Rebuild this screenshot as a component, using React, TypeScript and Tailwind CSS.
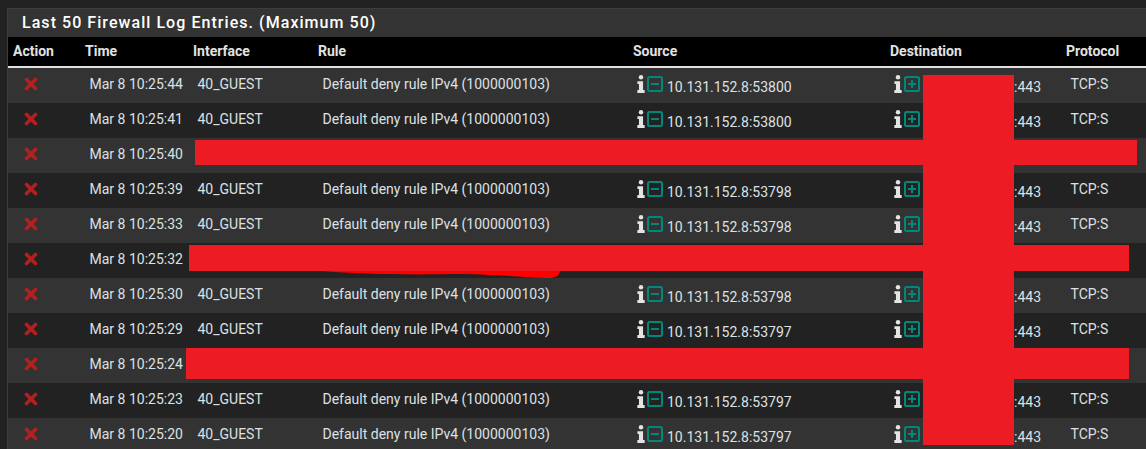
const columns = 'grid grid-cols-[72px_108px_125px_315px_257px_176px_1fr]';

const rows = [
  { time: 'Mar 8 10:25:44', source: '10.131.152.8:53800' },
  { time: 'Mar 8 10:25:41', source: '10.131.152.8:53800' },
  { time: 'Mar 8 10:25:40', hidden: true },
  { time: 'Mar 8 10:25:39', source: '10.131.152.8:53798' },
  { time: 'Mar 8 10:25:33', source: '10.131.152.8:53798' },
  { time: 'Mar 8 10:25:32', hidden: true },
  { time: 'Mar 8 10:25:30', source: '10.131.152.8:53798' },
  { time: 'Mar 8 10:25:29', source: '10.131.152.8:53797' },
  { time: 'Mar 8 10:25:24', hidden: true },
  { time: 'Mar 8 10:25:23', source: '10.131.152.8:53797' },
  { time: 'Mar 8 10:25:20', source: '10.131.152.8:53797' },
];

function BlockIcon() {
  return (
    <svg width="14" height="14" viewBox="0 0 14 14" className="text-[#b3201f]">
      <path d="M2.5 2.5 L11.5 11.5 M11.5 2.5 L2.5 11.5" stroke="currentColor" strokeWidth="3.6" strokeLinecap="round" />
    </svg>
  );
}

function InfoIcon() {
  return (
    <svg width="8" height="18" viewBox="0 0 9 20" className="text-[#e4e4e4]" preserveAspectRatio="none">
      <circle cx="4.5" cy="2.6" r="2.5" fill="currentColor" />
      <path d="M0.5 7 H6.8 V16.8 H8.6 V20 H0.4 V16.8 H2.2 V10 H0.5 Z" fill="currentColor" />
    </svg>
  );
}

function BoxIcon({ plus }: { plus?: boolean }) {
  return (
    <svg width="16" height="16" viewBox="0 0 16 16" className="text-[#00897b]">
      <rect x="1" y="1" width="14" height="14" rx="1.5" fill="none" stroke="currentColor" strokeWidth="2" />
      <path d={plus ? 'M4 8 H12 M8 4 V12' : 'M4 8 H12'} stroke="currentColor" strokeWidth="2" />
    </svg>
  );
}

function Address({ plus, children }: { plus?: boolean; children: React.ReactNode }) {
  return (
    <div className="flex items-center pl-[9px]">
      <span className="mb-[3px] flex items-center gap-[2px]">
        <InfoIcon />
        <BoxIcon plus={plus} />
      </span>
      <span className="ml-[4px] flex pt-[3px]">{children}</span>
    </div>
  );
}

export default function App() {
  return (
    <div className="relative h-[449px] w-[1146px] overflow-hidden bg-[#222222] pl-[7px] pt-2 font-['Roboto',sans-serif] text-[14px] text-[#dde1e4]">
      <div className="border-l border-t border-[#3d3d3d]">
        <h2 className="flex h-[28px] items-center bg-[#333333] pl-[14px] text-[16px] font-medium tracking-[1.05px] text-white">
          Last 50 Firewall Log Entries. (Maximum 50)
        </h2>

        <div className={`${columns} h-[31px] items-center border-b-2 border-[#e2e2e2] bg-black text-[14px] font-bold text-[#e2e2e2]`}>
          <div className="pl-[5px]">Action</div>
          <div className="pl-[5px]">Time</div>
          <div className="pl-[5px]">Interface</div>
          <div className="pl-[5px]">Rule</div>
          <div className="pl-[5px]">Source</div>
          <div className="pl-[5px]">Destination</div>
          <div className="pl-[5px]">Protocol</div>
        </div>

        {rows.map((row, i) => (
          <div key={row.time} className={`${columns} h-[35px] items-center ${i % 2 === 0 ? 'bg-[#333333]' : 'bg-[#222222]'}`}>
            <div className="pb-[4px] pl-[16px]">
              <BlockIcon />
            </div>
            <div className="pb-[2px] pl-[9.5px]">{row.time}</div>
            {!row.hidden && (
              <>
                <div className="pb-[2px] pl-[9.5px]">40_GUEST</div>
                <div className="pb-[2px] pl-[9.5px]">Default deny rule IPv4 (1000000103)</div>
                <Address>{row.source}</Address>
                <Address plus>
                  <span className="w-[90px]" />
                  :443
                </Address>
                <div className="pb-[2px] pl-[9.5px]">TCP:S</div>
              </>
            )}
          </div>
        ))}
      </div>

      {/* red marker blocks painted over the screenshot */}
      <div className="absolute left-[195px] top-[140px] h-[25px] w-[942px] bg-[#ed1c24]" />
      <div className="absolute left-[189px] top-[245px] h-[26px] w-[940px] bg-[#ed1c24]" />
      <svg className="absolute left-[320px] top-[270px]" width="240" height="9" viewBox="0 0 240 9">
        <path d="M0 1 H240 C239 6 236 8 228 8 C200 7 170 4 130 4 C90 5 40 4 0 1 Z" fill="#ff0000" />
      </svg>
      <div className="absolute left-[186px] top-[348px] h-[31px] w-[943px] bg-[#ed1c24]" />
      <div className="absolute left-[923px] top-[75px] h-[370px] w-[91px] bg-[#ed1c24]" />
    </div>
  );
}
